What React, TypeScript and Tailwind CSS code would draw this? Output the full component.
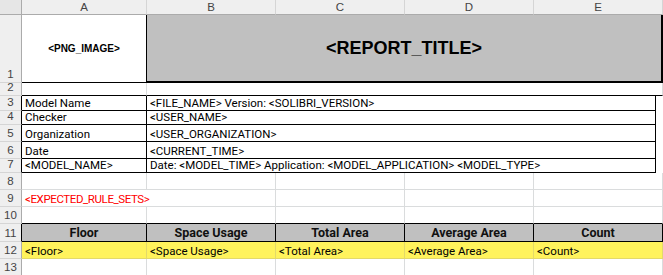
import React from "react";

const RH =
  "bg-[#efefef] border-r border-b border-b-[#d5d5d5] text-[#444] flex items-end justify-center text-[11.5px] leading-[13px] pb-px";
const RH_GRAY = RH + " border-r-[#ababab]";
const RH_BLACK = RH + " border-r-black";

const CH =
  "bg-[#efefef] border-r border-b border-r-[#d5d5d5] border-b-[#ababab] text-[#444] flex items-center justify-center text-[11.5px] leading-[13px]";

const GRID = "bg-white border-r border-b border-[#dadcdd]";

const TXT = "flex items-end px-[3px] whitespace-nowrap overflow-visible text-[11.5px] leading-[14px]";
const CF = { fontFamily: 'Roboto, "Liberation Sans", sans-serif' };

export default function App() {
  return (
    <div
      className="w-[663px] h-[275px] overflow-hidden bg-white text-black"
      style={{ fontFamily: '"Liberation Sans", Arial, sans-serif' }}
    >
      <div className="grid grid-cols-[22px_125px_129px_129px_129px_129px] grid-rows-[15px_68px_13px_15px_14px_17px_17px_14px_17px_17px_17px_18px_17px_17px]">
        {/* header row */}
        <div className="bg-[#e6e6e6] border-r border-b border-[#ababab]" />
        <div className={CH}>A</div>
        <div className={CH}>B</div>
        <div className={CH}>C</div>
        <div className={CH}>D</div>
        <div className={CH}>E</div>

        {/* row 1 */}
        <div className={RH_GRAY}>1</div>
        <div className="bg-white border-r border-b border-black flex items-center justify-center font-bold text-[10px] leading-[12px] text-black">
          &lt;PNG_IMAGE&gt;
        </div>
        <div className="col-span-4 bg-[#c0c0c0] border-r-2 border-b-2 border-black flex items-center justify-center font-bold text-[18px] leading-[20px] text-black">
          &lt;REPORT_TITLE&gt;
        </div>

        {/* row 2 */}
        <div className={RH_GRAY}>2</div>
        <div className="bg-white border-r border-b border-r-[#dadcdd] border-b-black" />
        <div className="col-span-4 bg-white border-r border-b border-r-[#dadcdd] border-b-black" />

        {/* row 3 */}
        <div className={RH_BLACK}>3</div>
        <div className={"border-r border-b border-black " + TXT} style={CF}>Model Name</div>
        <div className={"col-span-4 border-r border-b border-black mr-[7px] " + TXT} style={CF}>
          &lt;FILE_NAME&gt; Version: &lt;SOLIBRI_VERSION&gt;
        </div>

        {/* row 4 */}
        <div className={RH_BLACK}>4</div>
        <div className={"border-r border-b border-black " + TXT} style={CF}>Checker</div>
        <div className={"col-span-4 border-r border-b border-black mr-[7px] " + TXT} style={CF}>
          &lt;USER_NAME&gt;
        </div>

        {/* row 5 */}
        <div className={RH_BLACK}>5</div>
        <div className={"border-r border-b border-black " + TXT} style={CF}>Organization</div>
        <div className={"col-span-4 border-r border-b border-black mr-[7px] " + TXT} style={CF}>
          &lt;USER_ORGANIZATION&gt;
        </div>

        {/* row 6 */}
        <div className={RH_BLACK}>6</div>
        <div className={"border-r border-b border-black " + TXT} style={CF}>Date</div>
        <div className={"col-span-4 border-r border-b border-black mr-[7px] " + TXT} style={CF}>
          &lt;CURRENT_TIME&gt;
        </div>

        {/* row 7 */}
        <div className={RH_BLACK}>7</div>
        <div className={"border-r border-b border-black " + TXT} style={CF}>&lt;MODEL_NAME&gt;</div>
        <div className={"col-span-4 border-r border-b border-black mr-[7px] " + TXT} style={CF}>
          Date: &lt;MODEL_TIME&gt; Application: &lt;MODEL_APPLICATION&gt; &lt;MODEL_TYPE&gt;
        </div>

        {/* row 8 */}
        <div className={RH_GRAY}>8</div>
        <div className={GRID} />
        <div className={GRID} />
        <div className={GRID} />
        <div className={GRID} />
        <div className={GRID} />

        {/* row 9 */}
        <div className={RH_GRAY}>9</div>
        <div
          className={"col-span-2 border-r border-b border-[#dadcdd] text-[#ff0000] tracking-[-0.4px] " + TXT}
          style={CF}
        >
          &lt;EXPECTED_RULE_SETS&gt;
        </div>
        <div className={GRID} />
        <div className={GRID} />
        <div className={GRID} />

        {/* row 10 */}
        <div className={RH_GRAY}>10</div>
        <div className="bg-white border-r border-b border-r-[#dadcdd] border-b-black" />
        <div className="bg-white border-r border-b border-r-[#dadcdd] border-b-black" />
        <div className="bg-white border-r border-b border-r-[#dadcdd] border-b-black" />
        <div className="bg-white border-r border-b border-r-[#dadcdd] border-b-black" />
        <div className="bg-white border-r border-b border-r-[#dadcdd] border-b-black" />

        {/* row 11 */}
        <div className={RH_BLACK}>11</div>
        {["Floor", "Space Usage", "Total Area", "Average Area", "Count"].map((h) => (
          <div
            key={h}
            className="bg-[#c0c0c0] border-r border-b border-black flex items-end justify-center pb-px font-bold text-[12.5px] leading-[15px] text-[#111]"
            style={CF}
          >
            {h}
          </div>
        ))}

        {/* row 12 */}
        <div className={RH_GRAY}>12</div>
        {["<Floor>", "<Space Usage>", "<Total Area>", "<Average Area>", "<Count>"].map((h) => (
          <div
            key={h}
            className={"bg-[#fff35c] border-r border-b border-r-[#e3d96a] border-b-[#e3d96a] " + TXT}
            style={CF}
          >
            {h}
          </div>
        ))}

        {/* row 13 */}
        <div className={RH_GRAY}>13</div>
        <div className={GRID} />
        <div className={GRID} />
        <div className={GRID} />
        <div className={GRID} />
        <div className={GRID} />
      </div>
    </div>
  );
}
